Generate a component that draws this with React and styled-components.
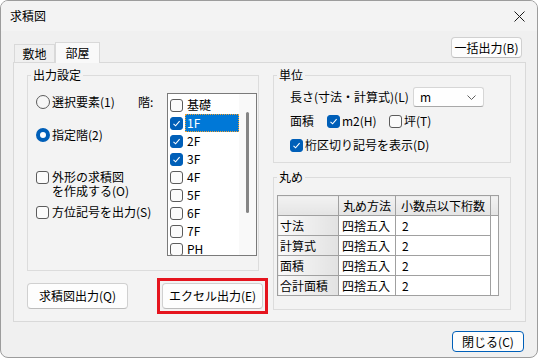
import React from 'react';
import styled, {createGlobalStyle} from 'styled-components';

const FLOORS = [
    {name: '基礎', checked: false},
    {name: '1F', checked: true, selected: true},
    {name: '2F', checked: true},
    {name: '3F', checked: true},
    {name: '4F', checked: false},
    {name: '5F', checked: false},
    {name: '6F', checked: false},
    {name: '7F', checked: false},
    {name: 'PH', checked: false},
]

const ROUNDING = [
    {label: '寸法', method: '四捨五入', digits: '2'},
    {label: '計算式', method: '四捨五入', digits: '2'},
    {label: '面積', method: '四捨五入', digits: '2'},
    {label: '合計面積', method: '四捨五入', digits: '2'},
]

function CheckBox({checked}) {
    return (
        <Box $checked={checked}>
            {checked &&
                <svg width="9" height="9" viewBox="0 0 9 9">
                    <polyline points="1.5,4.8 3.6,6.8 7.6,2.2" fill="none" stroke="#fff" strokeWidth="1.1"/>
                </svg>
            }
        </Box>
    )
}

function App() {
    return (
        <>
            <GlobalStyle/>
            <Window>
                <TitleBar>
                    <span>求積図</span>
                    <svg width="11" height="11" viewBox="0 0 11 11">
                        <path d="M0.5 0.5 L10.5 10.5 M10.5 0.5 L0.5 10.5" stroke="#1a1a1a" strokeWidth="1"/>
                    </svg>
                </TitleBar>

                <Body>
                    <TabRow>
                        <Tabs>
                            <Tab>敷地</Tab>
                            <Tab $active>部屋</Tab>
                        </Tabs>
                        <TopButton>一括出力(B)</TopButton>
                    </TabRow>

                    <Panel>
                        <LeftColumn>
                            <Group $height={204}>
                                <Legend>出力設定</Legend>
                                <OutputInner>
                                    <OptionColumn>
                                        <Option $mt={11}>
                                            <Radio/>
                                            <span>選択要素(1)</span>
                                        </Option>
                                        <Option $mt={17}>
                                            <Radio $checked/>
                                            <span>指定階(2)</span>
                                        </Option>
                                        <CheckOption $mt={27}>
                                            <CheckBox/>
                                            <span>外形の求積図<br/>を作成する(O)</span>
                                        </CheckOption>
                                        <CheckOption $mt={7}>
                                            <CheckBox/>
                                            <span>方位記号を出力(S)</span>
                                        </CheckOption>
                                    </OptionColumn>

                                    <FloorLabel>階:</FloorLabel>

                                    <ListBox>
                                        <ListItems>
                                            {FLOORS.map((floor) => (
                                                <ListItem key={floor.name}>
                                                    <CheckBox checked={floor.checked}/>
                                                    <ItemText $selected={floor.selected}>{floor.name}</ItemText>
                                                </ListItem>
                                            ))}
                                        </ListItems>
                                        <ScrollTrack>
                                            <ScrollThumb/>
                                        </ScrollTrack>
                                    </ListBox>
                                </OutputInner>
                            </Group>

                            <ButtonRow>
                                <Button>求積図出力(Q)</Button>
                                <Marker>
                                    <Button>エクセル出力(E)</Button>
                                </Marker>
                            </ButtonRow>
                        </LeftColumn>

                        <RightColumn>
                            <Group $height={96}>
                                <Legend>単位</Legend>
                                <UnitInner>
                                    <UnitRow>
                                        <LengthLabel>長さ(寸法・計算式)(L)</LengthLabel>
                                        <Select>
                                            <span>m</span>
                                            <svg width="9" height="5" viewBox="0 0 9 5">
                                                <polyline points="0.5,0.5 4.5,4.5 8.5,0.5" fill="none" stroke="#606060" strokeWidth="1"/>
                                            </svg>
                                        </Select>
                                    </UnitRow>
                                    <UnitRow $mt={6} $h={16}>
                                        <AreaLabel>面積</AreaLabel>
                                        <Inline $w={62}>
                                            <CheckBox checked/>
                                            <span>m2(H)</span>
                                        </Inline>
                                        <Inline>
                                            <CheckBox/>
                                            <span>坪(T)</span>
                                        </Inline>
                                    </UnitRow>
                                    <UnitRow $mt={8} $h={16}>
                                        <Inline>
                                            <CheckBox checked/>
                                            <span>桁区切り記号を表示(D)</span>
                                        </Inline>
                                    </UnitRow>
                                </UnitInner>
                            </Group>

                            <Group $height={141} $mt={6}>
                                <Legend>丸め</Legend>
                                <RoundInner>
                                    <Grid>
                                        <colgroup>
                                            <col style={{width: 61}}/>
                                            <col style={{width: 57}}/>
                                            <col style={{width: 95}}/>
                                            <col style={{width: 8}}/>
                                        </colgroup>
                                        <thead>
                                            <tr>
                                                <HeadCell/>
                                                <HeadCell>丸め方法</HeadCell>
                                                <HeadCell>小数点以下桁数</HeadCell>
                                                <HeadCell/>
                                            </tr>
                                        </thead>
                                        <tbody>
                                            {ROUNDING.map((row) => (
                                                <tr key={row.label}>
                                                    <RowHead>{row.label}</RowHead>
                                                    <Cell>{row.method}</Cell>
                                                    <Cell $pad={6}>{row.digits}</Cell>
                                                    <Filler/>
                                                </tr>
                                            ))}
                                        </tbody>
                                    </Grid>
                                </RoundInner>
                            </Group>
                        </RightColumn>
                    </Panel>

                    <Footer>
                        <CloseButton>閉じる(C)</CloseButton>
                    </Footer>
                </Body>
            </Window>
        </>
    );
}

const GlobalStyle = createGlobalStyle`
    html, body {
        margin: 0;
        padding: 0;
        background: #ffffff;
    }
    body {
        font-family: "Noto Sans CJK JP", "Noto Sans", sans-serif;
        font-size: 12px;
        color: #000;
    }
    * {
        box-sizing: border-box;
    }
`

const Window = styled.div`
    width: 538px;
    height: 358px;
    border: 1px solid #9c9c9c;
    border-radius: 8px;
    background: #f0f0f0;
    overflow: hidden;
    display: flex;
    flex-direction: column;
`

const TitleBar = styled.div`
    height: 30px;
    flex: none;
    display: flex;
    align-items: center;
    justify-content: space-between;
    padding: 0 12px 0 9px;
    background: #f3f3f3;
    line-height: 16px;
`

const Body = styled.div`
    flex: 1;
    display: flex;
    flex-direction: column;
    padding: 0 11px 0 12px;
`

const TabRow = styled.div`
    height: 31px;
    display: flex;
    justify-content: space-between;
    align-items: flex-end;
`

const Tabs = styled.div`
    display: flex;
    align-items: flex-end;
    padding-left: 1px;
`

const Tab = styled.div`
    width: ${p => p.$active ? 45 : 41}px;
    height: ${p => p.$active ? 21 : 18}px;
    margin-bottom: ${p => p.$active ? -1 : 0}px;
    position: relative;
    z-index: 1;
    display: flex;
    align-items: center;
    justify-content: center;
    line-height: 16px;
    border: 1px solid #d9d9d9;
    border-bottom: none;
    background: ${p => p.$active ? '#f9f9f9' : '#f0f0f0'};
    padding-bottom: ${p => p.$active ? 1 : 0}px;
`

const BaseButton = styled.div`
    display: flex;
    flex: none;
    align-items: center;
    justify-content: center;
    background: #fdfdfd;
    border: 1px solid #d0d0d0;
    border-bottom-color: #bcbcbc;
    border-radius: 4px;
    line-height: 16px;
    white-space: nowrap;
`

const TopButton = styled(BaseButton)`
    align-self: flex-start;
    margin-top: 6px;
    margin-right: 4px;
    width: 71px;
    height: 21px;
`

const Panel = styled.div`
    height: 260px;
    flex: none;
    border: 1px solid #d9d9d9;
    background: #f3f3f3;
    display: grid;
    grid-template-columns: 232px 238px;
    column-gap: 14px;
    padding: 4px 0 0 13px;
`

const LeftColumn = styled.div`
    display: flex;
    flex-direction: column;
`

const RightColumn = styled.div`
    display: flex;
    flex-direction: column;
`

const Group = styled.fieldset`
    margin: ${p => p.$mt || 0}px 0 0 0;
    padding: 0;
    height: ${p => p.$height}px;
    border: 1px solid #dcdcdc;
    min-width: 0;
`

const Legend = styled.legend`
    margin-left: 3px;
    padding: 0 2px;
    line-height: 16px;
    font-size: 12px;
`

const OutputInner = styled.div`
    display: flex;
    padding-left: 8px;
`

const OptionColumn = styled.div`
    width: 102px;
    display: flex;
    flex-direction: column;
    white-space: nowrap;
`

const Option = styled.div`
    margin-top: ${p => p.$mt}px;
    height: 16px;
    display: flex;
    align-items: center;
    gap: 2px;
    line-height: 16px;
`

const CheckOption = styled.div`
    margin-top: ${p => p.$mt}px;
    display: flex;
    align-items: flex-start;
    gap: 3px;
    line-height: 14px;

    & > div {
        margin-top: 1px;
    }
`

const Radio = styled.div`
    width: 14px;
    height: 14px;
    flex: none;
    border-radius: 50%;
    border: ${p => p.$checked ? '4px solid #005fb8' : '1px solid #5c5c5c'};
    background: ${p => p.$checked ? '#ffffff' : '#f6f6f6'};
`

const Box = styled.div`
    width: 13px;
    height: 13px;
    flex: none;
    border-radius: 3px;
    border: 1px solid ${p => p.$checked ? '#005fb8' : '#5c5c5c'};
    background: ${p => p.$checked ? '#005fb8' : '#fbfbfb'};
    display: flex;
    align-items: center;
    justify-content: center;
`

const FloorLabel = styled.div`
    width: 29px;
    margin-top: 11px;
    line-height: 16px;
    height: 16px;
`

const ListBox = styled.div`
    width: 90px;
    height: 163px;
    margin-top: 10px;
    border: 1px solid #7a7a7a;
    background: #ffffff;
    display: flex;
`

const ListItems = styled.div`
    flex: 1;
    padding-top: 2px;
    overflow: hidden;
`

const ListItem = styled.div`
    height: 18px;
    display: flex;
    align-items: center;
    padding-left: 2px;
    gap: 2px;
`

const ItemText = styled.div`
    flex: 1;
    height: 18px;
    line-height: 16px;
    padding: 0 1px;
    color: ${p => p.$selected ? '#ffffff' : '#000'};
    background: ${p => p.$selected ? '#0078d7' : 'transparent'};
    border: 1px ${p => p.$selected ? 'dotted #f0a030' : 'solid transparent'};
`

const ScrollTrack = styled.div`
    width: 17px;
    background: #f9f9f9;
    display: flex;
    justify-content: center;
    padding-top: 18px;
`

const ScrollThumb = styled.div`
    width: 3px;
    height: 101px;
    border-radius: 2px;
    background: #858585;
`

const ButtonRow = styled.div`
    display: flex;
    align-items: center;
    gap: 29px;
    margin-top: 7px;
`

const Button = styled(BaseButton)`
    width: 101px;
    height: 26px;
`

const Marker = styled.div`
    flex: none;
    border: 3px solid #e5141e;
    padding: 2px;
`

const UnitInner = styled.div`
    padding: 4px 0 0 16px;
`

const UnitRow = styled.div`
    display: flex;
    align-items: center;
    height: ${p => p.$h || 20}px;
    margin-top: ${p => p.$mt || 0}px;
    line-height: 16px;
`

const LengthLabel = styled.div`
    width: 123px;
`

const Select = styled.div`
    width: 71px;
    height: 20px;
    background: #fefefe;
    border: 1px solid #d6d6d6;
    border-bottom-color: #a8a8a8;
    border-radius: 3px;
    display: flex;
    align-items: center;
    justify-content: space-between;
    padding: 0 7px 0 6px;
`

const AreaLabel = styled.div`
    width: 37px;
`

const Inline = styled.div`
    width: ${p => p.$w ? p.$w + 'px' : 'auto'};
    display: flex;
    align-items: center;
    gap: 2px;
`

const RoundInner = styled.div`
    padding: 10px 0 0 3px;
`

const Grid = styled.table`
    width: 221px;
    border-collapse: collapse;
    table-layout: fixed;
    background: #ffffff;
    border: 1px solid #a0a0a0;
    line-height: 16px;

    td, th {
        height: 20px;
        padding: 0;
        font-weight: normal;
        white-space: nowrap;
        overflow: hidden;
    }
`

const HeadCell = styled.th`
    border: 1px solid #a0a0a0;
    background: linear-gradient(#f2f2f2, #e4e4e4);
    text-align: center;
`

const RowHead = styled.td`
    border: 1px solid #a0a0a0;
    background: linear-gradient(to right, #fafafa, #e2e2e2);
    padding-left: 2px !important;
`

const Cell = styled.td`
    border: 1px solid #a0a0a0;
    padding-left: ${p => p.$pad || 3}px !important;
`

const Filler = styled.td`
    border-left: 1px solid #a0a0a0;
`

const Footer = styled.div`
    display: flex;
    justify-content: flex-end;
    padding: 9px 2px 0 0;
`

const CloseButton = styled(BaseButton)`
    width: 72px;
    height: 21px;
    border: 1px solid #005fb8;
`

export default App;
